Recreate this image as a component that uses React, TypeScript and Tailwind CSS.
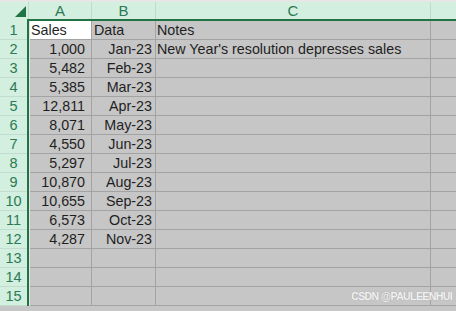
import React from "react";

const rows: [string, string][] = [
  ["1,000", "Jan-23"],
  ["5,482", "Feb-23"],
  ["5,385", "Mar-23"],
  ["12,811", "Apr-23"],
  ["8,071", "May-23"],
  ["4,550", "Jun-23"],
  ["5,297", "Jul-23"],
  ["10,870", "Aug-23"],
  ["10,655", "Sep-23"],
  ["6,573", "Oct-23"],
  ["4,287", "Nov-23"],
];

const cols = [
  { key: "A", width: "w-[63px]" },
  { key: "B", width: "w-[64px]" },
  { key: "C", width: "w-[275px]" },
];

export default function App() {
  const body: string[][] = [
    ["Sales", "Data", "Notes"],
    ...rows.map(([sales, date], i) => [
      sales,
      date,
      i === 0 ? "New Year's resolution depresses sales" : "",
    ]),
    ["", "", ""],
    ["", "", ""],
    ["", "", ""],
  ];

  return (
    <div className="relative h-[311px] w-[456px] overflow-hidden bg-[#c6c6c6] font-['Liberation_Sans',Arial,sans-serif] text-[14.3px] text-[#1f1f1f]">
      <div className="h-[2px] bg-[#e6e6e6]" />

      {/* column headers */}
      <div className="flex h-[17px] bg-[#d3efdf] text-[15px] text-[#2b7a55]">
        <div className="relative w-[29px] border-r border-[#c4d8cc]">
          <svg
            className="absolute left-[15px] top-[4px]"
            width="11"
            height="11"
            viewBox="0 0 11 11"
          >
            <polygon points="11,0 11,11 0,11" fill="#217346" />
          </svg>
        </div>
        {cols.map((c) => (
          <div
            key={c.key}
            className={`${c.width} flex items-center justify-center border-r border-[#c4d8cc] leading-[17px]`}
          >
            {c.key}
          </div>
        ))}
        <div className="flex-1" />
      </div>

      <div className="flex">
        {/* row headers */}
        <div className="w-[27px] bg-[#d3efdf] pt-[2px] text-[14.5px] text-[#2b7a55]">
          {body.map((_, i) => (
            <div
              key={i}
              className="flex h-[19px] items-center justify-center border-b border-[#c2dccd] leading-[18px]"
            >
              {i + 1}
            </div>
          ))}
        </div>
        <div className="w-[2px] bg-[#217346]" />

        {/* cells */}
        <div className="flex-1">
          <div className="h-[2px] bg-[#217346]" />
          <div className="border-l border-[#e4e4e4]">
            {body.map((r, i) => (
              <div key={i} className="flex h-[19px] border-b border-[#a3a3a3]">
                <div
                  className={`flex w-[62px] items-center border-r border-[#a3a3a3] leading-[18px] ${
                    i === 0 ? "bg-white pl-[1px]" : "justify-end pr-[6px]"
                  }`}
                >
                  {r[0]}
                </div>
                <div
                  className={`flex w-[64px] items-center border-r border-[#a3a3a3] leading-[18px] ${
                    i === 0 ? "pl-[2px]" : "justify-end pr-[3px]"
                  }`}
                >
                  {r[1]}
                </div>
                <div className="flex w-[275px] items-center whitespace-nowrap border-r border-[#a3a3a3] pl-[1px] leading-[18px]">
                  {r[2]}
                </div>
                <div className="flex-1" />
              </div>
            ))}
          </div>
        </div>
      </div>

      <div className="absolute right-[4px] top-[290px] text-[10.5px] font-bold leading-[13px] tracking-[-0.6px] text-[#f2f2f2] [text-shadow:0_0_1px_#9a9a9a]">
        CSDN @PAULEENHUI
      </div>
    </div>
  );
}
